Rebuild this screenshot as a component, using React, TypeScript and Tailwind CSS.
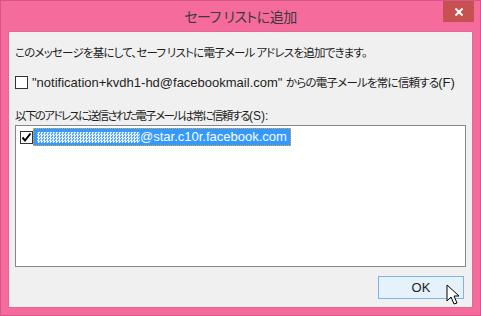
import React from 'react';

const base = "font-['Segoe_UI','Liberation_Sans','Noto_Sans_CJK_JP',sans-serif]";
const jaText = "font-['Noto_Sans_CJK_JP',sans-serif] [font-feature-settings:'palt'] text-[11.5px] tracking-[-0.8px]";

function J({ children, tight }: { children: React.ReactNode; tight?: boolean }) {
  return <span className={tight ? `${jaText} tracking-[-1.6px]` : jaText}>{children}</span>;
}

function Cursor() {
  return (
    <svg width="17" height="23" viewBox="0 0 17 23" className="absolute left-[445px] top-[283px]">
      <path
        d="M1 1 L1 17 L5 13 L8 20 L11 19 L8 12 L13 12 Z"
        fill="#fff"
        stroke="#000"
        strokeWidth="1"
      />
    </svg>
  );
}

function Scrambled() {
  return (
    <span className="inline-block h-[11px] w-[103px] bg-[repeating-conic-gradient(#ffffff_0_25%,#5aa8ff_0_50%)] bg-[length:3px_3px] opacity-90" />
  );
}

export default function App() {
  return (
    <div className={`${base} relative w-[481px] h-[316px] bg-[#f56b9b] border border-[#d8558a] flex flex-col overflow-hidden`}>
      <div className="relative h-[30px] flex items-center justify-center">
        <span className="font-['Noto_Sans_CJK_JP',sans-serif] [font-feature-settings:'palt'] text-[14px] tracking-[-0.5px] text-[#3a3a3a] pt-[1px]">
          セーフ&nbsp;リストに追加
        </span>
        <div className="absolute right-[6px] top-0 w-[31px] h-[21px] bg-[#c75050] flex items-center justify-center">
          <svg width="10" height="10" viewBox="0 0 10 10">
            <path d="M1.5 1.5 L8.5 8.5 M8.5 1.5 L1.5 8.5" stroke="#fff" strokeWidth="2" />
          </svg>
        </div>
      </div>

      <div className="mx-[7px] h-[277px] bg-[#f0f0f0] border border-[#e0699a] text-[13px] text-[#1e1e1e] flex flex-col">
        <p className="mt-[12px] ml-[6px] leading-[16px]">
          <J>このメッセージを基にして、セーフ&nbsp;リストに電子メール&nbsp;アドレスを追加できます。</J>
        </p>

        <label className="mt-[13px] ml-[6px] flex items-center gap-[4px] leading-[16px]">
          <span className="w-[13px] h-[13px] bg-white border border-[#333]" />
          <span>
            "notification+kvdh1-hd@facebookmail.com" <J>からの電子メールを常に信頼する</J>(F)
          </span>
        </label>

        <p className="mt-[16px] ml-[6px] leading-[16px]">
          <J tight>以下のアドレスに送信された電子メールは常に信頼する</J>
          <span className="text-[12px]">(S):</span>
        </p>

        <div className="mt-[1px] ml-[6px] w-[451px] h-[142px] bg-white border border-[#828790] pt-[2px] pl-[4px]">
          <div className="flex items-center">
            <span className="w-[13px] h-[13px] bg-white border border-[#333] flex items-center justify-center">
              <svg width="11" height="11" viewBox="0 0 11 11">
                <path d="M1.5 5.5 L4 8.5 L9.5 1.5" fill="none" stroke="#000" strokeWidth="2" />
              </svg>
            </span>
            <span className="h-[18px] w-[258px] bg-[#3399ff] text-white border border-dotted border-[#f5a623] flex items-center pl-[3px] leading-[16px]">
              <Scrambled />
              <span>@star.c10r.facebook.com</span>
            </span>
          </div>
        </div>

        <div className="flex justify-end mt-[9px] mr-[8px]">
          <button className="w-[86px] h-[23px] bg-[#e5f1fb] border border-[#7eb4ea] text-[13px] text-[#1e1e1e] leading-none">
            OK
          </button>
        </div>
      </div>
      <Cursor />
    </div>
  );
}
